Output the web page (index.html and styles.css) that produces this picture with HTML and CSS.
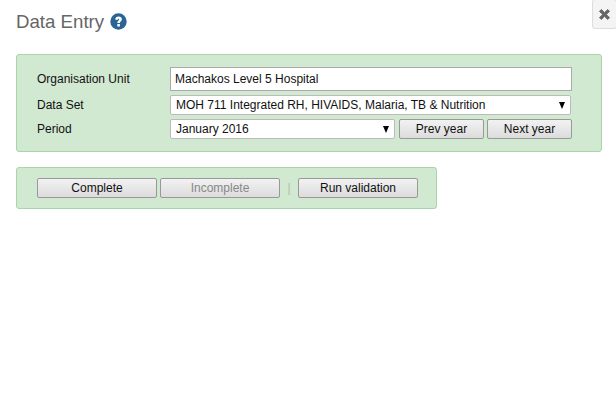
FILE: index.html
```html
<!DOCTYPE html>
<html lang="en">
<head>
  <meta charset="UTF-8">
  <title>Data Entry</title>
  <link rel="stylesheet" href="styles.css">
</head>
<body>

<button class="close-button" aria-label="Close">
  <svg width="13" height="13" viewBox="0 0 14 14"><path d="M1.6 3.6 L3.6 1.6 L7 5 L10.4 1.6 L12.4 3.6 L9 7 L12.4 10.4 L10.4 12.4 L7 9 L3.6 12.4 L1.6 10.4 L5 7 Z" fill="#666" stroke="#666" stroke-linejoin="round"/></svg>
</button>

<h2 class="page-title">
  Data Entry
  <svg class="help-icon" width="17" height="17" viewBox="0 0 17 17">
    <circle cx="8.5" cy="8.5" r="8.2" fill="#2a6496"/>
    <path d="M5.2 6.6 C5.3 4.6 6.8 3.5 8.6 3.5 C10.6 3.5 11.9 4.7 11.9 6.3 C11.9 8.3 9.9 8.4 9.9 10.1 L7.3 10.1 C7.1 7.8 9.2 7.6 9.2 6.5 C9.2 6 8.9 5.8 8.5 5.8 C8 5.8 7.8 6.2 7.6 7.1 Z" fill="#fff"/>
    <rect x="7.3" y="11" width="2.6" height="2.5" fill="#fff"/>
  </svg>
</h2>

<div class="panel panel-form">
  <label class="field-label">Organisation Unit</label>
  <input class="org-input" type="text" value="Machakos Level 5 Hospital">

  <label class="field-label">Data Set</label>
  <div class="select-wrap dataset-select">
    <select><option>MOH 711 Integrated RH, HIVAIDS, Malaria, TB &amp; Nutrition</option></select>
  </div>

  <label class="field-label">Period</label>
  <div class="period-row">
    <div class="select-wrap period-select">
      <select><option>January 2016</option></select>
    </div>
    <button class="btn year-btn">Prev year</button>
    <button class="btn year-btn">Next year</button>
  </div>
</div>

<div class="panel panel-actions">
  <button class="btn action-btn">Complete</button>
  <button class="btn action-btn" disabled>Incomplete</button>
  <span class="divider">|</span>
  <button class="btn action-btn">Run validation</button>
</div>

</body>
</html>
```

FILE: styles.css
```css
/* General Styles */
body {
  font-family: "Liberation Sans", Arial, sans-serif;
  font-size: 12px;
  margin: 0;
  padding: 0 14px 0 16px;
  background: #fff;
  color: #111;
}

.page-title {
  display: flex;
  align-items: flex-start;
  gap: 6px;
  margin: 0;
  padding-top: 11px;
  height: 43px;
  box-sizing: border-box;
  font-size: 18.67px;
  line-height: 22px;
  font-weight: normal;
  color: #666;
}

.help-icon {
  margin-top: 2px;
}

.close-button {
  position: absolute;
  top: -1px;
  right: -1px;
  width: 25px;
  height: 30px;
  padding: 0;
  display: flex;
  align-items: center;
  justify-content: center;
  background: #f4f4f4;
  border: 1px solid #ddd;
  border-radius: 3px;
}

.panel {
  background: #d1e8d1;
  border: 1px solid #a9d6a9;
  border-radius: 3px;
  box-sizing: border-box;
}

.panel-form {
  display: grid;
  grid-template-columns: 133px 402px;
  grid-template-rows: 24px 20px 20px;
  row-gap: 4px;
  align-items: center;
  align-content: start;
  height: 98px;
  margin-top: 11px;
  padding: 12px 0 0 20px;
}

.field-label {
  line-height: 14px;
}

input.org-input,
select {
  font-family: inherit;
  font-size: 12px;
  color: #111;
  background: #fff;
  box-sizing: border-box;
  width: 100%;
  margin: 0;
  outline: none;
}

input.org-input {
  height: 24px;
  padding: 0 4px;
  border: 1px solid #aaa;
}

select {
  appearance: none;
  height: 20px;
  padding: 0 5px;
  border: 1px solid #bbb;
  border-radius: 2px;
}

.select-wrap {
  position: relative;
}

.select-wrap::after {
  content: "";
  position: absolute;
  top: 7px;
  right: 6px;
  border-left: 3.5px solid transparent;
  border-right: 3.5px solid transparent;
  border-top: 7px solid #000;
}

.dataset-select {
  width: 401px;
}

.period-row {
  display: flex;
  gap: 3px;
}

.period-select {
  width: 225px;
  margin-right: 1px;
}

.btn {
  font-family: inherit;
  font-size: 12px;
  color: #111;
  height: 20px;
  padding: 0;
  box-sizing: border-box;
  background: linear-gradient(#f2f2f2, #dcdcdc);
  border: 1px solid #999;
  border-radius: 2px;
}

.btn:disabled {
  color: #888;
}

.year-btn {
  width: 85px;
}

.panel-actions {
  display: flex;
  align-items: center;
  gap: 3px;
  width: 421px;
  height: 42px;
  margin-top: 15px;
  padding-left: 20px;
}

.action-btn {
  width: 120px;
}

.divider {
  width: 12px;
  text-align: center;
  color: #b5bda5;
}
```
